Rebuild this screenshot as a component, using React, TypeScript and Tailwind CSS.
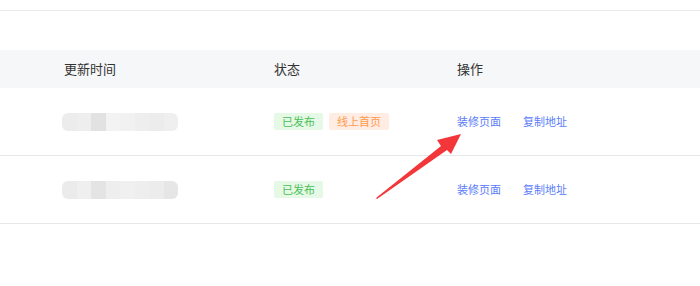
import React from 'react';

const font = { fontFamily: '"Noto Sans CJK SC", "Noto Sans", sans-serif' };

type Row = { blocks: string[]; tags: { label: string; kind: 'green' | 'orange' }[] };

const ROWS: Row[] = [
  {
    blocks: ['#ececec', '#eeeeee', '#e2e2e2', '#f3f3f3', '#f1f1f1', '#eeeeee', '#ececec', '#efefef'],
    tags: [
      { label: '已发布', kind: 'green' },
      { label: '线上首页', kind: 'orange' },
    ],
  },
  {
    blocks: ['#ebebeb', '#efefef', '#e4e4e4', '#eeeeee', '#f0f0f0', '#eeeeee', '#ececec', '#e6e6e6'],
    tags: [{ label: '已发布', kind: 'green' }],
  },
];

const Tag: React.FC<{ label: string; kind: 'green' | 'orange' }> = ({ label, kind }) => (
  <span
    className={`inline-flex h-[17px] items-center rounded-[2px] px-[8px] text-[11px] leading-none ${
      kind === 'green' ? 'bg-[#e6f8e6] text-[#48c057]' : 'bg-[#ffece3] text-[#ff9a4c]'
    }`}
  >
    {label}
  </span>
);

const Blurred: React.FC<{ blocks: string[] }> = ({ blocks }) => (
  <div className="flex h-[18px] w-[116px] overflow-hidden rounded-[6px] blur-[0.5px]">
    {blocks.map((c, i) => (
      <div key={i} className="h-full flex-1" style={{ backgroundColor: c }} />
    ))}
  </div>
);

export default function App() {
  return (
    <div className="relative h-[286px] w-[700px] overflow-hidden bg-white" style={font}>
      <div className="h-[11px] border-b border-[#ebebeb]" />
      <div className="h-[39px]" />
      <div className="flex h-[38px] items-center bg-[#f6f7f9] text-[13px] text-[#333]">
        <div className="w-[274px] pl-[64px]">更新时间</div>
        <div className="w-[183px]">状态</div>
        <div>操作</div>
      </div>
      {ROWS.map((row, i) => (
        <div key={i} className="flex h-[68px] items-center border-b border-[#e6e7ea]">
          <div className="w-[274px] pl-[62px]">
            <Blurred blocks={row.blocks} />
          </div>
          <div className="flex w-[183px] gap-[6px]">
            {row.tags.map((t) => (
              <Tag key={t.label} {...t} />
            ))}
          </div>
          <div className="flex gap-[22px] text-[11px] text-[#5b7cfa]">
            <span>装修页面</span>
            <span>复制地址</span>
          </div>
        </div>
      ))}
      <svg className="absolute left-0 top-0" width="700" height="286" viewBox="0 0 700 286">
        <polygon
          points="376,198 441,146 437,140 461,134 451,154 447,150 377,199"
          fill="#f2363a"
        />
      </svg>
    </div>
  );
}
